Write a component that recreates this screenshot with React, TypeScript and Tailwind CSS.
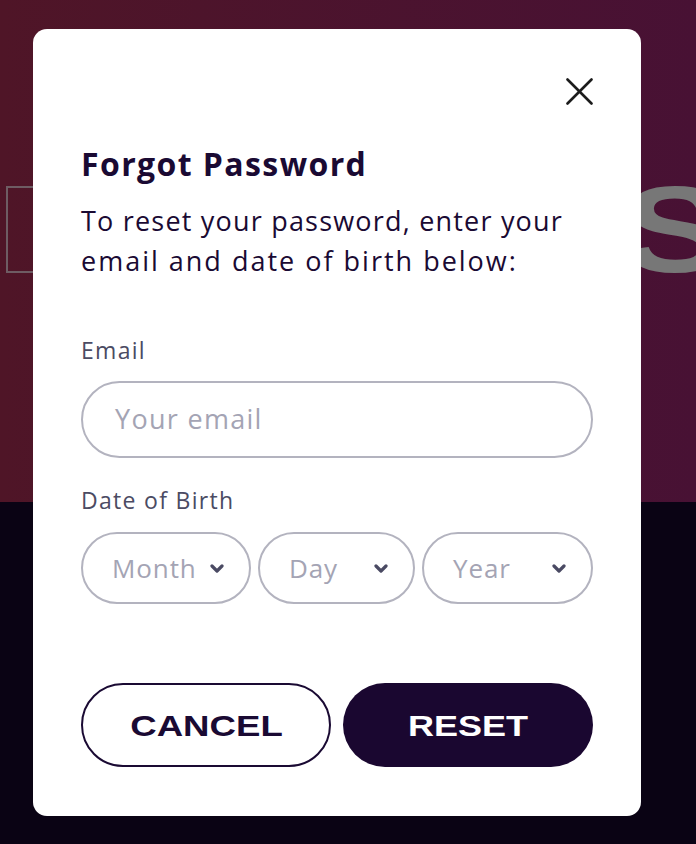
const body = "font-['Open_Sans',sans-serif]";
const heavy = "font-['Liberation_Sans',Arial,sans-serif]";

function CloseIcon() {
  return (
    <svg width="27" height="27" viewBox="0 0 27 27" fill="none" stroke="#1c1c1c" strokeWidth="2.6" strokeLinecap="round">
      <path d="M1.5 1.5 L25.5 25.5" />
      <path d="M25.5 1.5 L1.5 25.5" />
    </svg>
  );
}

function Chevron() {
  return (
    <svg width="14" height="9" viewBox="0 0 14 9" fill="none" stroke="#4a4a63" strokeWidth="3.2" strokeLinecap="round" strokeLinejoin="round">
      <path d="M2 2 L7 7 L12 2" />
    </svg>
  );
}

function SelectBox({ label, width }: { label: string; width: string }) {
  return (
    <div className={`${width} h-[72px] rounded-full border-2 border-[#b3b3bf] flex items-center justify-between pl-[29px] pr-[25px]`}>
      <span className="text-[26px] text-[#a4a4b4] tracking-[0.9px]">{label}</span>
      <Chevron />
    </div>
  );
}

export default function App() {
  return (
    <div className={`relative w-[696px] h-[844px] overflow-hidden ${body}`}>
      <div className="flex flex-col h-full">
        <div className="h-[502px] bg-gradient-to-r from-[#4f1527] to-[#481134]" />
        <div className="flex-1 bg-[#0a0314]" />
      </div>

      {/* page content showing through under the dialog */}
      <div className="absolute left-[6px] top-[186px] w-[60px] h-[87px] border-2 border-[#6e5c63]" />
      <div className={`absolute left-[622px] top-[169px] origin-left scale-x-[1.3] text-[122px] leading-none font-bold text-[#777777] ${heavy}`}>S</div>

      <div className="absolute left-[33px] top-[29px] w-[608px] h-[787px] bg-white rounded-[14px] pt-[49px] px-[48px]">
        <div className="flex justify-end">
          <CloseIcon />
        </div>

        <h2 className="mt-[41px] text-[32px] leading-[36px] font-bold text-[#1a0a33] tracking-[1.4px]">Forgot Password</h2>
        <p className="mt-[19px] text-[27px] leading-[40px] text-[#1a0a33]">
          <span className="tracking-[1.2px]">To reset your password, enter your</span>
          <br />
          <span className="tracking-[2px]">email and date of birth below:</span>
        </p>

        <div className="mt-[54px] text-[23px] leading-[30px] text-[#4b4b63] tracking-[1.3px]">Email</div>
        <div className="mt-[16px] h-[77px] rounded-full border-2 border-[#b3b3bf] flex items-center pl-[32px]">
          <span className="text-[27px] text-[#a4a4b4] tracking-[1.3px]">Your email</span>
        </div>

        <div className="mt-[27px] text-[23px] leading-[30px] text-[#4b4b63] tracking-[1.3px]">Date of Birth</div>
        <div className="mt-[17px] flex gap-[7px]">
          <SelectBox label="Month" width="w-[170px]" />
          <SelectBox label="Day" width="w-[157px]" />
          <SelectBox label="Year" width="w-[171px]" />
        </div>

        <div className="mt-[79px] flex gap-[12px]">
          <button className="w-[250px] h-[84px] rounded-full border-2 border-[#1a0a33] bg-white flex items-center justify-center">
            <span className={`inline-block scale-x-[1.22] text-[30px] font-bold text-[#1a0a33] ${heavy}`}>CANCEL</span>
          </button>
          <button className="w-[250px] h-[84px] rounded-full bg-[#1a0730] flex items-center justify-center">
            <span className={`inline-block scale-x-[1.2] text-[30px] font-bold text-white ${heavy}`}>RESET</span>
          </button>
        </div>
      </div>
    </div>
  );
}
